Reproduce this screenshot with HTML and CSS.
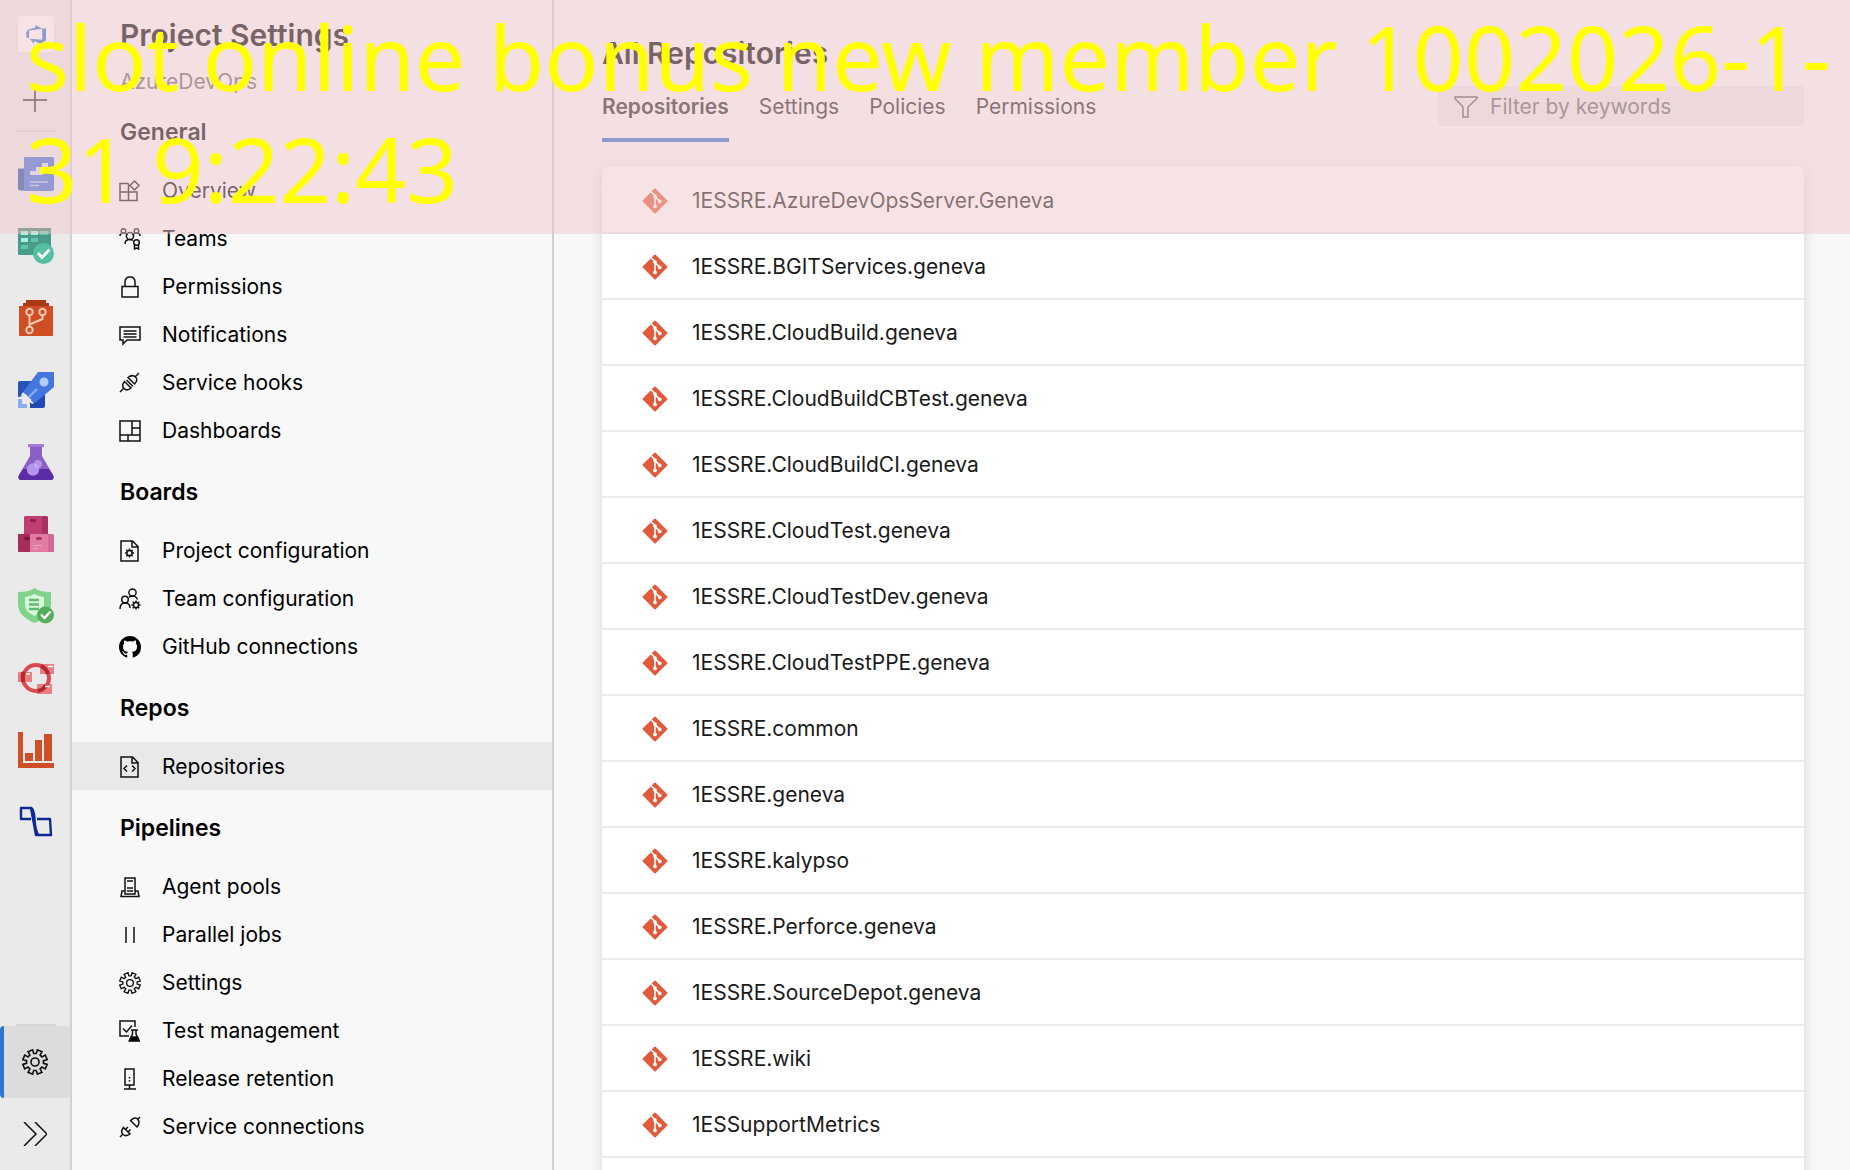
FILE: index.html
```html
<!DOCTYPE html>
<html lang="en">
<head>
  <meta charset="UTF-8">
  <meta name="viewport" content="width=device-width, initial-scale=1.0">
  <title>Project Settings - Repositories</title>
  <link rel="stylesheet" href="styles.css">
</head>
<body>
  <!-- Shared icons -->
  <svg class="sprite" aria-hidden="true">
    <symbol id="git" viewBox="0 0 24 24">
      <path fill="#e05a3c" d="M12 1.200 22.800 12 12 22.800 1.200 12z" stroke="#e05a3c" stroke-width="1.600" stroke-linejoin="round"/>
      <path d="M7.500 2.500 12 7v10M12 8l4.400 4.400" fill="none" stroke="#fff" stroke-width="1.500"/>
      <circle cx="12" cy="7.400" r="1.700" fill="#fff"/>
      <circle cx="12" cy="17" r="1.700" fill="#fff"/>
      <circle cx="16.400" cy="12.400" r="1.700" fill="#fff"/>
    </symbol>
    <symbol id="gear" viewBox="-12 -12 24 24">
      <path d="M-2.200-11.200-1.200-7.800 1.200-7.800 2.200-11.200 6.400-9.500 4.700-6.400 6.400-4.700 9.500-6.400 11.200-2.200 7.800-1.200 7.800 1.200 11.200 2.200 9.500 6.400 6.400 4.700 4.700 6.400 6.400 9.500 2.200 11.200 1.200 7.800-1.200 7.800-2.200 11.200-6.400 9.500-4.700 6.400-6.400 4.700-9.500 6.400-11.200 2.200-7.800 1.200-7.800-1.200-11.200-2.200-9.500-6.400-6.400-4.700-4.700-6.400-6.400-9.500z"/>
      <circle r="3.700"/>
    </symbol>
    <symbol id="mini-gear" viewBox="-5 -5 10 10">
      <circle r="2.600"/>
      <path d="M0-4.600V-3M0 3v1.600M-4.600 0H-3M3 0h1.600M-3.200-3.200l1.100 1.100M2.100 2.100l1.100 1.100M-3.200 3.200l1.100-1.100M2.100-2.100l1.100-1.100"/>
    </symbol>
  </svg>

  <div class="app">
    <nav class="rail" aria-label="Services">
      <a class="rail-logo" href="#" aria-label="Azure DevOps">
        <svg viewBox="0 0 36 36" width="36" height="36">
          <rect width="36" height="36" rx="4" fill="#fff"/>
          <path fill="#2f6fd0" d="M28 12.500v11.500l-4.500 4-7.500-2.700v2.700l-4.200-5.200 12.400 1V12.600zM24.200 12.700 17.400 9v2.600L10.400 13.600 8.300 16v5.200l2.700 1.200v-7.800z"/>
        </svg>
      </a>
      <button class="rail-add" aria-label="Add">
        <svg class="line" viewBox="0 0 24 24" width="24" height="24"><path d="M12 0v24M0 12h24"/></svg>
      </button>
      <div class="rail-divider"></div>
      <div class="rail-items">
        <a href="#" aria-label="Overview">
          <svg viewBox="0 0 36 36" width="36" height="36">
            <path fill="#1d4aa5" d="M0 12.500h7v22H2a2 2 0 0 1-2-2z"/>
            <path fill="#3a6fd8" d="M7 1h28a1 1 0 0 1 1 1v31a2 2 0 0 1-2 2H4a3 3 0 0 0 2-3V2a1 1 0 0 1 1-1z"/>
            <path fill="#cfe0ff" d="M12 15h6v-4h6V7h6v7l-6 5H12z"/>
            <path d="M12 26h18M12 29.500h9" stroke="#a9c4f5" stroke-width="1.500"/>
          </svg>
        </a>
        <a href="#" aria-label="Boards">
          <svg viewBox="0 0 36 36" width="36" height="36">
            <path fill="#4a9c8a" d="M1 0h31a1 1 0 0 1 1 1v25a1 1 0 0 1-1 1H1a1 1 0 0 1-1-1V1a1 1 0 0 1 1-1z"/>
            <path fill="#3b7a6e" d="M0 1a1 1 0 0 1 1-1h31a1 1 0 0 1 1 1v2H0z"/>
            <path fill="#9ff5e2" d="M3 3h7v4H3zM13 3h7v4h-7zM3 10h7v4H3z"/>
            <path fill="#5fc6ae" d="M22 3h8v4h-8zM13 10h7v4h-7zM3 17h7v4H3z"/>
            <circle cx="25.500" cy="25.500" r="10.500" fill="#55bfa3"/>
            <path d="m20 25 4 4.500 7.500-8" fill="none" stroke="#fff" stroke-width="2.800"/>
          </svg>
        </a>
        <a href="#" aria-label="Repos">
          <svg viewBox="0 0 36 36" width="36" height="36">
            <path fill="#a93a14" d="M8 0h20v3h3v4H5V3h3z"/>
            <path fill="#cf4f24" d="M1 6h34v29a1 1 0 0 1-1 1H2a1 1 0 0 1-1-1z"/>
            <g fill="none" stroke="#f8c9b4" stroke-width="2">
              <circle cx="11.500" cy="12" r="3.200"/>
              <circle cx="24.500" cy="12" r="3.200"/>
              <circle cx="11.500" cy="30" r="3.200"/>
              <path d="M11.500 15v12M24.500 15v4l-13 5.500"/>
            </g>
          </svg>
        </a>
        <a href="#" aria-label="Pipelines">
          <svg viewBox="0 0 36 36" width="36" height="36">
            <path fill="#2752b8" d="M0 11a2 2 0 0 1 2-2h13L5 24 0 25z"/>
            <path fill="#1f4ab5" d="M12 36V29l15-13v18a2 2 0 0 1-2 2z"/>
            <path fill="#4576df" d="M20 0h16v15L17 31 5 20z"/>
            <circle cx="26" cy="10" r="4.500" fill="#b4cbfa"/>
            <path d="m19 17-11 11" stroke="#86a8f2" stroke-width="2.500"/>
            <path fill="#eaeaea" d="m5 20 11 11-2 1-3-3-2 4-2-3-4-1 3-3-3-3z"/>
            <path fill="#8aaaf0" d="M0 27h4v5h5v4H0z"/>
          </svg>
        </a>
        <a href="#" aria-label="Test Plans">
          <svg viewBox="0 0 36 36" width="36" height="36">
            <path fill="#8b5fc8" d="M12 2h12v10l11 19q2 5-3 5H4q-5 0-3-5l11-19z"/>
            <path fill="#5c2ca5" d="M5 25h26l4 6q2 5-3 5H4q-5 0-3-5z"/>
            <path fill="#a37cdb" d="M10 0h16v3H10z"/>
            <circle cx="15" cy="25.500" r="6.200" fill="#b794ec"/>
            <circle cx="20" cy="20" r="4" fill="#c9aef5" opacity=".7"/>
          </svg>
        </a>
        <a href="#" aria-label="Artifacts">
          <svg viewBox="0 0 36 36" width="36" height="36">
            <path fill="#bf3f73" d="M7 0h17v18H6V1z"/>
            <path fill="#aa2f62" d="M24 0h5l1 1v17h-6z"/>
            <path fill="#a52c5c" d="M0 18h12v18H1a1 1 0 0 1-1-1z"/>
            <path fill="#e07ba3" d="M12 18h18v18H12z"/>
            <path fill="#d46693" d="M30 18h5l1 1v16a1 1 0 0 1-1 1h-5z"/>
            <rect x="12" y="3" width="6" height="3" rx="1.500" fill="#8c1f4b"/>
            <rect x="6" y="21" width="6" height="3" rx="1.500" fill="#7b1640"/>
            <rect x="18" y="21" width="6" height="3" rx="1.500" fill="#b0305f"/>
            <path d="M15 29.500h9M15 32.500h5" stroke="#eba4c0" stroke-width="1.200"/>
          </svg>
        </a>
        <a href="#" aria-label="Compliance">
          <svg viewBox="0 0 36 36" width="36" height="36">
            <path fill="#7fd48a" d="M16.500 0q5 4 15.500 4a1 1 0 0 1 1 1v11c0 9-7 15-16.500 19C7 31 0 25 0 16V5a1 1 0 0 1 1-1q10.500 0 15.500-4z"/>
            <path fill="#d8f8dc" d="M16.500 6q4 2.500 9.500 3v8c0 5-4 8-9.500 11C11 25 7 22 7 17V9q5.500-.5 9.500-3z"/>
            <path d="M11 12h10M11 16.500h10M11 21h10" stroke="#5dbb6a" stroke-width="2.400"/>
            <circle cx="27.500" cy="27" r="8.500" fill="#55ae5c"/>
            <path d="m23 26.500 3.500 3.500 6-6.500" fill="none" stroke="#fff" stroke-width="2.300"/>
          </svg>
        </a>
        <a href="#" aria-label="Cycles">
          <svg viewBox="0 0 36 36" width="36" height="36">
            <path fill="#e87f82" d="M22 4h14v10H22zM0 12h14v10H0zM19 24h15v10H19z"/>
            <circle cx="18" cy="18" r="13" fill="none" stroke="#dc4a4f" stroke-width="4"/>
            <path fill="none" stroke="#b52a30" stroke-width="4" d="M23 6q5 2 7 8M5.200 12q-1 5 0 10M20 31q5-1 8-6"/>
            <path d="M30 6.500h5M8 14h4M27 26.500h5" stroke="#fff" stroke-width="1.400"/>
          </svg>
        </a>
        <a href="#" aria-label="Analytics">
          <svg viewBox="0 0 36 36" width="36" height="36">
            <path fill="#cf5028" d="M0 0h5v31h31v5H0zM7 21h8v8H7zM17 8h7v21h-7zM26 2h8v27h-8z"/>
          </svg>
        </a>
        <a href="#" aria-label="Flow">
          <svg viewBox="0 0 36 36" width="36" height="36">
            <path fill="none" stroke="#0b2a94" stroke-width="2.400" stroke-linejoin="round" d="M13 15H3V4h10l5 27h15l-1-16H19"/>
            <path fill="none" stroke="#0b2a94" stroke-width="2.400" d="M13 4q3 1 3.500 11T20 31"/>
          </svg>
        </a>
      </div>
      <div class="rail-bottom">
        <div class="rail-divider"></div>
        <a class="active" href="#" aria-label="Project settings">
          <svg class="line" width="26" height="26"><use href="#gear"/></svg>
        </a>
        <button aria-label="Expand">
          <svg class="line" viewBox="0 0 24 24" width="24" height="24"><path d="m1 0 12 12L1 24M12 0l12 12-12 12"/></svg>
        </button>
      </div>
    </nav>

    <aside class="sidebar">
      <h1>Project Settings</h1>
      <p class="project">AzureDevOps</p>

      <h2>General</h2>
      <ul>
        <li><a href="#"><svg class="line" viewBox="0 0 22 22" width="22" height="22"><path d="M9.500 3.500H1v17h17V12H1M9.500 3.500v17M15.500 1l4.500 4.500-4.500 4.500L11 5.500z"/></svg>Overview</a></li>
        <li><a href="#"><svg class="line" viewBox="0 0 22 22" width="22" height="22"><circle cx="4.500" cy="3" r="2.300"/><circle cx="17.500" cy="3" r="2.300"/><circle cx="11" cy="8" r="3.600"/><path d="M1 8q0-3 3.500-3T8 7M21 8q0-3-3.500-3T14 7M6 16q0-4.500 5-4.500 2 0 3 1M15.500 17v4l2-1 2 1v-4" /><circle cx="17.500" cy="14.500" r="2.800"/></svg>Teams</a></li>
        <li><a href="#"><svg class="line" viewBox="0 0 22 22" width="22" height="22"><path d="M3 10.500h16v10.500H3zM6 10.500V6q0-5 5-5t5 5v4.500"/></svg>Permissions</a></li>
        <li><a href="#"><svg class="line" viewBox="0 0 22 22" width="22" height="22"><path d="M1 3h20v13H8l-4 4v-4H1zM4.500 7h13M4.500 10h13M4.500 13h13"/></svg>Notifications</a></li>
        <li><a href="#"><svg class="line" viewBox="0 0 22 22" width="22" height="22"><path d="m1 20 3.500-3.500M16.500 4.500 20 1M5.500 9.500l6.500 6.500q-4 3.500-7 .5t.5-7zM9 5.500l6.500 6.500q4-4 1-7T9 5.500zM7.500 8l6.500 6.500"/></svg>Service hooks</a></li>
        <li><a href="#"><svg class="line" viewBox="0 0 22 22" width="22" height="22"><path d="M1 1h20v20H1zM13 1v14M1 15h20M13 8h8M9 15v6"/></svg>Dashboards</a></li>
      </ul>

      <h2>Boards</h2>
      <ul>
        <li><a href="#"><svg class="line" viewBox="0 0 22 22" width="22" height="22"><path d="M2 1h11.500L19 6.500V21H2zM13 1v6h6"/><use href="#mini-gear" x="5.500" y="8" width="10" height="10"/></svg>Project configuration</a></li>
        <li><a href="#"><svg class="line" viewBox="0 0 22 22" width="22" height="22"><circle cx="13.500" cy="4.500" r="3.600"/><circle cx="6" cy="11.500" r="3.300"/><path d="M1 21q0-6 5-6t5 5M10 9q6-3 8.500 2.500"/><use href="#mini-gear" x="12" y="12" width="10" height="10"/></svg>Team configuration</a></li>
        <li><a href="#"><svg viewBox="0 0 16 16" width="22" height="22"><path d="M8 0C3.580 0 0 3.580 0 8c0 3.540 2.290 6.530 5.470 7.590.4.070.55-.17.55-.38 0-.19-.01-.82-.01-1.490-2.010.37-2.530-.49-2.690-.94-.09-.23-.48-.94-.82-1.130-.28-.15-.68-.52-.01-.53.63-.01 1.080.58 1.230.82.72 1.210 1.870.87 2.330.66.07-.52.28-.87.51-1.070-1.780-.2-3.640-.89-3.640-3.950 0-.87.31-1.590.82-2.150-.08-.2-.36-1.020.08-2.120 0 0 .67-.21 2.200.82.64-.18 1.320-.27 2-.27s1.360.09 2 .27c1.530-1.040 2.200-.82 2.200-.82.44 1.100.16 1.920.08 2.120.51.56.82 1.270.82 2.150 0 3.070-1.870 3.750-3.650 3.950.29.25.54.73.54 1.480 0 1.070-.01 1.930-.01 2.200 0 .21.15.46.55.38A8.010 8.010 0 0 0 16 8c0-4.420-3.580-8-8-8z"/></svg>GitHub connections</a></li>
      </ul>

      <h2>Repos</h2>
      <ul>
        <li><a class="selected" href="#"><svg class="line" viewBox="0 0 22 22" width="22" height="22"><path d="M2 1h11.500L19 6.500V21H2zM13 1v6h6M8 9.500 5 12.500l3 3M13 9.500l3 3-3 3"/></svg>Repositories</a></li>
      </ul>

      <h2>Pipelines</h2>
      <ul>
        <li><a href="#"><svg class="line" viewBox="0 0 22 22" width="22" height="22"><path d="M6 18V2h10v16zM8 5h6M8 12h6M8 15h6M6 15H3l-1 5.500h18L19 15h-3"/></svg>Agent pools</a></li>
        <li><a href="#"><svg class="line" viewBox="0 0 22 22" width="22" height="22"><path d="M7 3v16M15 3v16"/></svg>Parallel jobs</a></li>
        <li><a href="#"><svg class="line" width="22" height="22"><use href="#gear"/></svg>Settings</a></li>
        <li><a href="#"><svg class="line" viewBox="0 0 22 22" width="22" height="22"><path d="M16 7V1H1v15h9M4 8.500l3.500 3.500L13 5.500M12 10h7"/><path d="M13.500 10v4l-3 6.500h9.500L17 14v-4"/><path fill="#000" d="m12 17-1.500 4h9.500L18.500 17z"/></svg>Test management</a></li>
        <li><a href="#"><svg class="line" viewBox="0 0 22 22" width="22" height="22"><path d="M6 1h9v16H6zM10.500 17v4M5 21h12"/><path d="M10.500 9v6" stroke-dasharray="1.500 1.500"/></svg>Release retention</a></li>
        <li><a href="#"><svg class="line" viewBox="0 0 22 22" width="22" height="22"><path d="m1 21 3-3M19 3l2-2M4.500 11.500l6.500 6.500q-4 3-7 .5t.5-7zM11.500 4.500l6.500 6.500q3.500-4 1-7.500t-7.500 1zM6.500 13.500 9 11M9 16l2.500-2.500"/></svg>Service connections</a></li>
      </ul>
    </aside>

    <main class="main">
      <h1>All Repositories</h1>
      <div class="toolbar">
        <div class="tabs">
          <a class="tab active" href="#">Repositories</a>
          <a class="tab" href="#">Settings</a>
          <a class="tab" href="#">Policies</a>
          <a class="tab" href="#">Permissions</a>
        </div>
        <label class="filter">
          <svg class="line" viewBox="0 0 24 24" width="24" height="24"><path d="M1 2h22v1.500l-9 8.500v10h-5V12L1 3.500z"/></svg>
          <input type="text" placeholder="Filter by keywords" aria-label="Filter by keywords">
        </label>
      </div>

      <ul class="repo-list">
        <li><a href="#"><svg width="26" height="26"><use href="#git"/></svg>1ESSRE.AzureDevOpsServer.Geneva</a></li>
        <li><a href="#"><svg width="26" height="26"><use href="#git"/></svg>1ESSRE.BGITServices.geneva</a></li>
        <li><a href="#"><svg width="26" height="26"><use href="#git"/></svg>1ESSRE.CloudBuild.geneva</a></li>
        <li><a href="#"><svg width="26" height="26"><use href="#git"/></svg>1ESSRE.CloudBuildCBTest.geneva</a></li>
        <li><a href="#"><svg width="26" height="26"><use href="#git"/></svg>1ESSRE.CloudBuildCI.geneva</a></li>
        <li><a href="#"><svg width="26" height="26"><use href="#git"/></svg>1ESSRE.CloudTest.geneva</a></li>
        <li><a href="#"><svg width="26" height="26"><use href="#git"/></svg>1ESSRE.CloudTestDev.geneva</a></li>
        <li><a href="#"><svg width="26" height="26"><use href="#git"/></svg>1ESSRE.CloudTestPPE.geneva</a></li>
        <li><a href="#"><svg width="26" height="26"><use href="#git"/></svg>1ESSRE.common</a></li>
        <li><a href="#"><svg width="26" height="26"><use href="#git"/></svg>1ESSRE.geneva</a></li>
        <li><a href="#"><svg width="26" height="26"><use href="#git"/></svg>1ESSRE.kalypso</a></li>
        <li><a href="#"><svg width="26" height="26"><use href="#git"/></svg>1ESSRE.Perforce.geneva</a></li>
        <li><a href="#"><svg width="26" height="26"><use href="#git"/></svg>1ESSRE.SourceDepot.geneva</a></li>
        <li><a href="#"><svg width="26" height="26"><use href="#git"/></svg>1ESSRE.wiki</a></li>
        <li><a href="#"><svg width="26" height="26"><use href="#git"/></svg>1ESSupportMetrics</a></li>
        <li></li>
      </ul>
    </main>
  </div>

  <div class="banner">slot online bonus new member 1002026-1-<br>31 9:22:43</div>
</body>
</html>
```

FILE: styles.css
```css
* {
  margin: 0;
  padding: 0;
  box-sizing: border-box;
}

body {
  font-family: Inter, "Liberation Sans", sans-serif;
  font-size: 21px;
  line-height: 24px;
  color: #000;
  background: #f8f8f8;
}

a {
  color: inherit;
  text-decoration: none;
}

ul {
  list-style: none;
}

button {
  border: none;
  background: none;
  cursor: pointer;
}

svg {
  flex: none;
  display: block;
}

.sprite {
  position: absolute;
  width: 0;
  height: 0;
}

.line {
  fill: none;
  stroke: #111;
  stroke-width: 1.5;
}

.app {
  display: flex;
  height: 100vh;
  overflow: hidden;
}

/* Left icon rail */
.rail {
  flex: none;
  width: 72px;
  display: flex;
  flex-direction: column;
  background: #eaeaea;
  border-right: 2px solid #d2d2d2;
}

.rail a,
.rail button {
  display: flex;
  align-items: center;
  justify-content: center;
  width: 100%;
  height: 72px;
}

.rail .rail-logo {
  height: 68px;
  padding-left: 2px;
}

.rail .rail-add {
  height: 62px;
  padding-top: 2px;
}

.rail-divider {
  height: 2px;
  margin: 0 14px 0 16px;
  background: #d6d6d6;
}

.rail-items {
  padding-top: 6px;
}

.rail-items a {
  padding-left: 2px;
}

.rail-bottom {
  margin-top: auto;
}

.rail a.active {
  background: #dcdcdc;
  border-left: 4px solid #2f74d0;
  border-radius: 4px;
  padding-right: 4px;
}

/* Settings menu */
.sidebar {
  flex: none;
  width: 482px;
  padding-top: 18px;
  border-right: 2px solid #d0d0d0;
  overflow: hidden;
}

.sidebar h1 {
  padding-left: 48px;
  font-size: 30px;
  line-height: 34px;
  font-weight: 600;
}

.project {
  padding: 18px 0 0 48px;
  color: #666;
}

.sidebar h2 {
  height: 72px;
  padding: 26px 0 0 48px;
  font-size: 23px;
  line-height: 24px;
  font-weight: 600;
}

.sidebar li a {
  display: flex;
  align-items: center;
  gap: 21px;
  height: 48px;
  padding: 2px 0 0 47px;
}

.sidebar li a.selected {
  background: #e9e9e9;
}

/* Content */
.main {
  flex: 1;
  min-width: 0;
  padding: 36px 46px 0 48px;
}

.main h1 {
  font-size: 30px;
  line-height: 34px;
  font-weight: 600;
}

.toolbar {
  display: flex;
  justify-content: space-between;
  align-items: flex-start;
  padding-top: 16px;
}

.tabs {
  display: flex;
  gap: 30px;
}

.tab {
  height: 56px;
  padding-top: 9px;
  color: #222;
}

.tab.active {
  font-weight: 600;
  border-bottom: 4px solid #2f6bc8;
}

.filter {
  display: flex;
  align-items: center;
  gap: 12px;
  width: 366px;
  height: 40px;
  padding: 2px 0 0 16px;
  background: #eaeaea;
  border-radius: 4px;
}

.filter .line {
  stroke: #555;
}

.filter input {
  flex: 1;
  min-width: 0;
  border: none;
  outline: none;
  background: none;
  font: inherit;
}

.filter input::placeholder {
  color: #666;
}

.repo-list {
  margin-top: 24px;
  background: #fff;
  border-radius: 8px;
  box-shadow: 0 4px 14px rgba(0, 0, 0, 0.14);
}

.repo-list li {
  height: 66px;
  border-top: 2px solid #eaeaea;
}

.repo-list li:first-child {
  border-top-color: transparent;
}

.repo-list a {
  display: flex;
  align-items: center;
  gap: 24px;
  height: 64px;
  padding: 2px 0 0 40px;
  color: #1a1a1a;
}

/* Notice over the top of the page */
.banner {
  position: absolute;
  top: 0;
  left: 0;
  width: 100%;
  padding: 0 0 10px 26px;
  background: rgba(239, 199, 203, 0.5);
  color: #ff0;
  font-family: "Noto Sans", "Open Sans", sans-serif;
  font-size: 90px;
  line-height: 112px;
  pointer-events: none;
}
```
